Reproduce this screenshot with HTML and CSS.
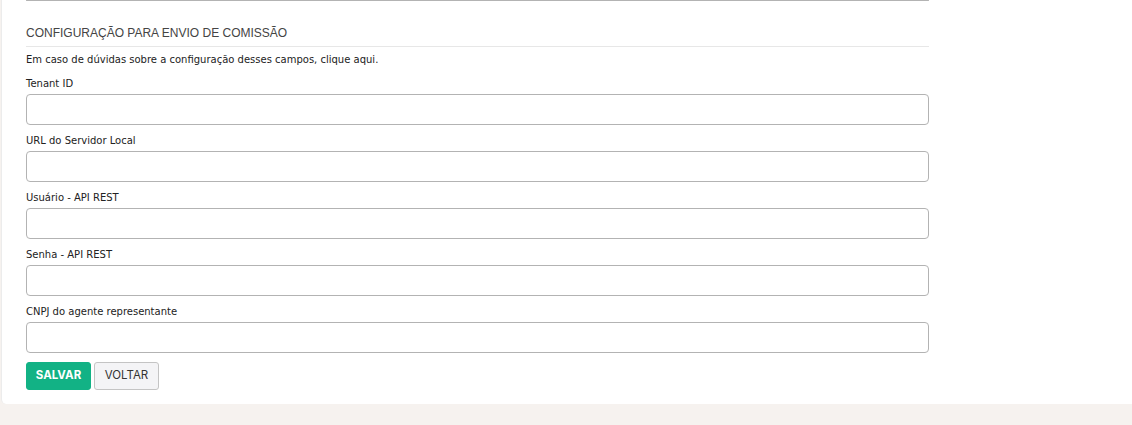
FILE: index.html
```html
<!DOCTYPE html>
<html lang="pt-BR">
<head>
<meta charset="utf-8">
<title>Configuração para envio de comissão</title>
<link rel="stylesheet" href="styles.css">
</head>
<body>
<div class="panel">
  <div class="form">
    <div class="input tail"></div>
    <h3 class="section-title">CONFIGURAÇÃO PARA ENVIO DE COMISSÃO</h3>
    <p class="hint">Em caso de dúvidas sobre a configuração desses campos, clique aqui.</p>
    <div class="field">
      <label class="label">Tenant ID</label>
      <input class="input" type="text">
    </div>
    <div class="field">
      <label class="label">URL do Servidor Local</label>
      <input class="input" type="text">
    </div>
    <div class="field">
      <label class="label">Usuário - API REST</label>
      <input class="input" type="text">
    </div>
    <div class="field">
      <label class="label">Senha - API REST</label>
      <input class="input" type="password">
    </div>
    <div class="field">
      <label class="label">CNPJ do agente representante</label>
      <input class="input" type="text">
    </div>
    <div class="actions">
      <button class="btn btn-primary" type="button">SALVAR</button>
      <button class="btn btn-default" type="button">VOLTAR</button>
    </div>
  </div>
</div>
</body>
</html>
```
FILE: styles.css
```css
html, body {
  margin: 0;
  padding: 0;
}
body {
  background: #f6f2ef;
  height: 425px;
  overflow: hidden;
}
.panel {
  margin-left: 1px;
  background: #ffffff;
  border-left: 1px solid #ececec;
  border-radius: 0 0 0 5px;
  padding: 0 0 14px 24px;
}
.form {
  width: 903px;
  display: flex;
  flex-direction: column;
}
.input {
  box-sizing: border-box;
  display: block;
  width: 903px;
  height: 31px;
  margin: 0;
  padding: 0 8px;
  background: #fff;
  border: 1px solid #b3b3b3;
  border-radius: 4px;
  outline: none;
  font: 12px "DejaVu Sans", sans-serif;
}
.input.tail {
  height: 1px;
  border-top: none;
  border-radius: 0 0 4px 4px;
}
.section-title {
  margin: 24px 0 0;
  padding-bottom: 4px;
  border-bottom: 1px solid #e7e7e7;
  font: 400 12px/17px "Liberation Sans", Arial, sans-serif;
  color: #444;
}
.hint {
  margin: 6px 0 0;
  font: 10px/14px "DejaVu Sans", Verdana, sans-serif;
  color: #222;
}
.field {
  display: flex;
  flex-direction: column;
  margin-top: 10px;
}
.field + .field {
  margin-top: 9px;
}
.label {
  font: 10px/14px "DejaVu Sans", Verdana, sans-serif;
  color: #222;
  margin-bottom: 3px;
}
.actions {
  display: flex;
  gap: 3px;
  margin-top: 9px;
}
.btn {
  box-sizing: border-box;
  height: 28px;
  width: 65px;
  border-radius: 3px;
  font: 11.5px/1 Inter, "Liberation Sans", sans-serif;
  cursor: pointer;
  padding: 0;
}
.btn-primary {
  background: #12b285;
  border: 1px solid #12b285;
  color: #fff;
  font-weight: 700;
}
.btn-default {
  background: #f4f4f6;
  border: 1px solid #c4c4c4;
  color: #333;
  font-weight: 400;
}
```
